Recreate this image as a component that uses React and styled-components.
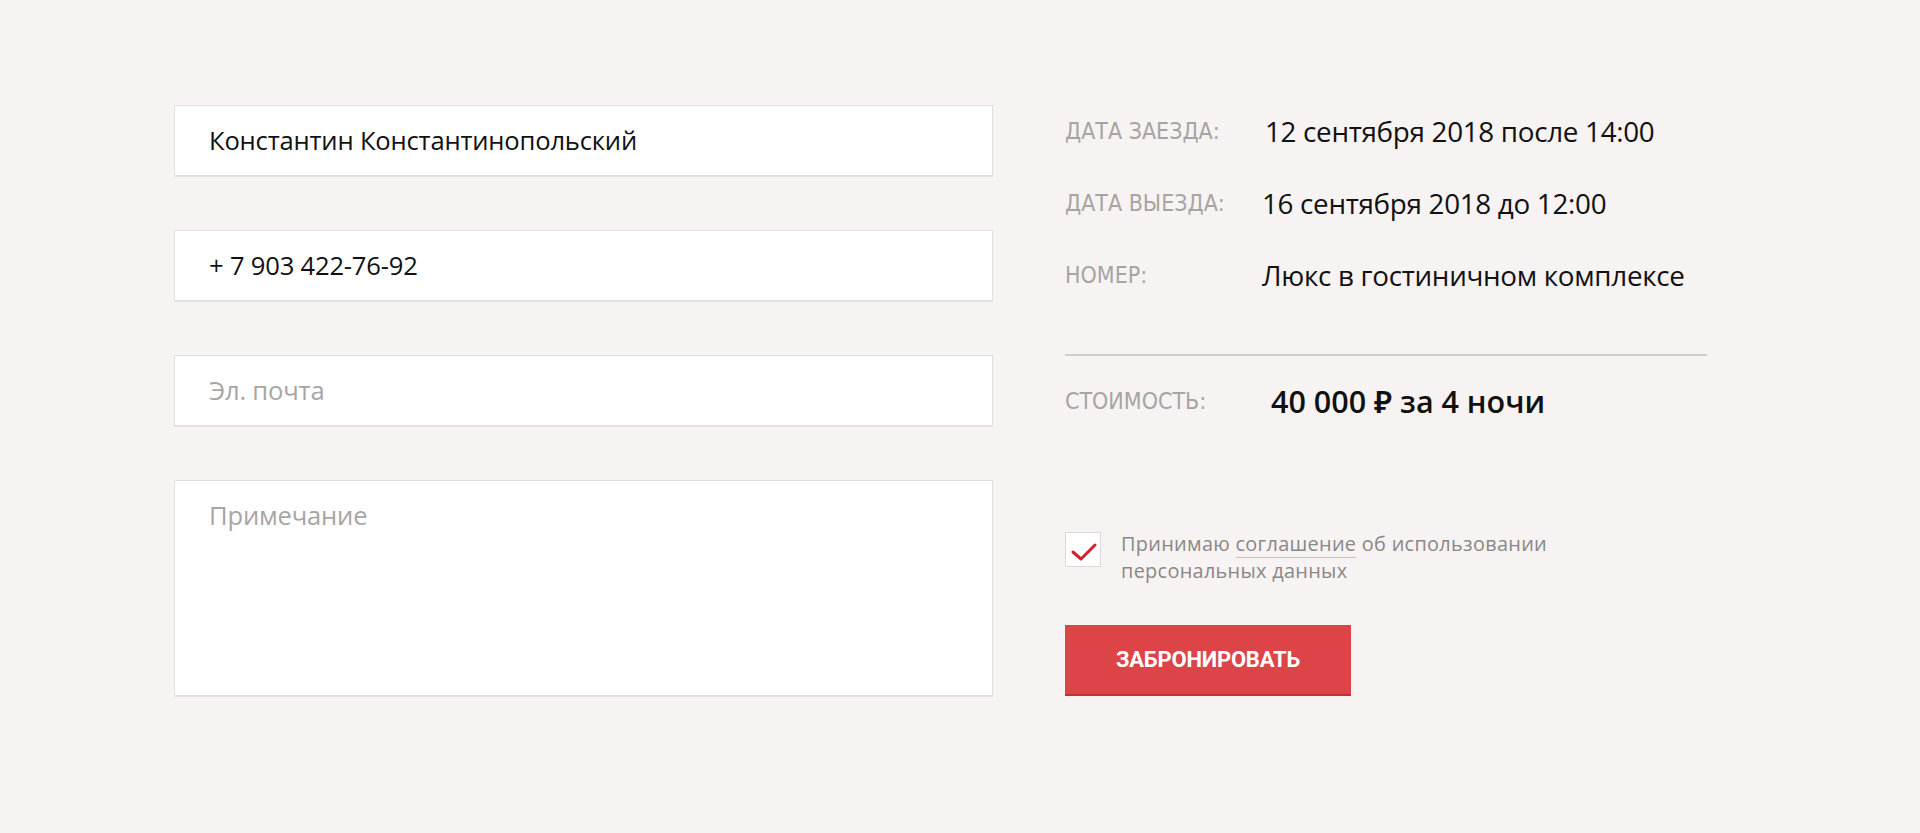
import React, { useState } from "react";
import styled, { createGlobalStyle } from "styled-components";

const GlobalStyle = createGlobalStyle`
    html, body {
        margin: 0;
        padding: 0;
        background: #f6f3f2;
    }
    body {
        font-family: "Open Sans", "Noto Sans", sans-serif;
        color: #111;
    }
`;

const Page = styled.main`
    min-height: 833px;
    box-sizing: border-box;
    padding-top: 105px;
`;

const Container = styled.div`
    width: 1572px;
    margin: 0 auto;
    display: grid;
    grid-template-columns: 819px 642px;
    column-gap: 72px;
    align-items: start;
`;

const Fields = styled.div`
    display: flex;
    flex-direction: column;
    gap: 54px;
`;

const Input = styled.input`
    box-sizing: border-box;
    width: 100%;
    height: 71px;
    padding: 0 34px;
    border: 1px solid #e2dedd;
    box-shadow: 0 1px 0 #e6e2e1;
    background: #fff;
    font-family: "Open Sans", "Noto Sans", sans-serif;
    font-size: 25.6px;
    letter-spacing: -0.2px;
    color: #111;
    outline: none;

    &::placeholder {
        color: #a9a5a5;
    }
`;

const Note = styled.textarea`
    box-sizing: border-box;
    width: 100%;
    height: 216px;
    padding: 18px 34px;
    border: 1px solid #e2dedd;
    box-shadow: 0 1px 0 #e6e2e1;
    background: #fff;
    font-family: "Open Sans", "Noto Sans", sans-serif;
    font-size: 25.6px;
    letter-spacing: -0.2px;
    line-height: 34px;
    color: #111;
    resize: none;
    outline: none;

    &::placeholder {
        color: #a9a5a5;
    }
`;

const Summary = styled.div`
    display: flex;
    flex-direction: column;
`;

const Row = styled.div`
    display: flex;
    align-items: center;
    height: 52px;
    margin-bottom: 20px;
`;

const Label = styled.span`
    flex: none;
    width: ${(p) => p.$width || 197}px;
    font-family: "Liberation Sans Narrow", "DejaVu Sans Condensed", sans-serif;
    font-stretch: condensed;
    font-size: 23px;
    color: #a8a4a4;
    text-transform: uppercase;
`;

const Value = styled.span`
    font-size: 27.8px;
    letter-spacing: -0.3px;
    color: #111;
`;

const Price = styled(Value)`
    font-size: 30.5px;
    font-weight: 600;
    letter-spacing: 0;
`;

const Divider = styled.hr`
    margin: 33px 0 19px;
    border: 0;
    border-top: 2px solid #d2cece;
`;

const Agreement = styled.label`
    display: flex;
    align-items: flex-start;
    gap: 20px;
    margin-top: 83px;
    cursor: pointer;
`;

const Box = styled.span`
    flex: none;
    box-sizing: border-box;
    width: 36px;
    height: 35px;
    margin-top: 2px;
    border: 1px solid #dcd8d7;
    background: #fff;
    display: flex;
    align-items: center;
    justify-content: center;
`;

const AgreementText = styled.span`
    font-size: 19.9px;
    line-height: 27px;
    letter-spacing: 0.3px;
    color: #8c8787;
`;

const Link = styled.a`
    color: inherit;
    text-decoration: none;
    border-bottom: 1px solid #c9c5c4;
`;

const Button = styled.button`
    margin-top: 41px;
    width: 286px;
    height: 71px;
    border: 0;
    border-bottom: 2px solid #c63035;
    background: #dc4447;
    color: #fff;
    font-family: "Roboto", "Open Sans", sans-serif;
    font-weight: 700;
    font-size: 22px;
    letter-spacing: -0.2px;
    text-transform: uppercase;
    cursor: pointer;
`;

function Check() {
    return (
        <svg width="30" height="30" viewBox="0 0 30 30">
            <polyline
                points="5,17 13,24 27,10"
                fill="none"
                stroke="#d3202c"
                strokeWidth="3"
                strokeLinecap="round"
                strokeLinejoin="round"
            />
        </svg>
    );
}

export default function App() {
    const [agreed, setAgreed] = useState(true);

    return (
        <Page>
            <GlobalStyle />
            <Container>
                <Fields>
                    <Input defaultValue="Константин Константинопольский" />
                    <Input defaultValue="+ 7 903 422-76-92" />
                    <Input placeholder="Эл. почта" />
                    <Note placeholder="Примечание" />
                </Fields>

                <Summary>
                    <Row>
                        <Label $width={200}>Дата заезда:</Label>
                        <Value>12 сентября 2018 после 14:00</Value>
                    </Row>
                    <Row>
                        <Label>Дата выезда:</Label>
                        <Value>16 сентября 2018 до 12:00</Value>
                    </Row>
                    <Row>
                        <Label>Номер:</Label>
                        <Value>Люкс в гостиничном комплексе</Value>
                    </Row>

                    <Divider />

                    <Row>
                        <Label $width={206}>Стоимость:</Label>
                        <Price>40 000 ₽ за 4 ночи</Price>
                    </Row>

                    <Agreement onClick={() => setAgreed(!agreed)}>
                        <Box>{agreed && <Check />}</Box>
                        <AgreementText>
                            Принимаю <Link href="#">соглашение</Link> об использовании
                            <br />
                            персональных данных
                        </AgreementText>
                    </Agreement>

                    <Button>Забронировать</Button>
                </Summary>
            </Container>
        </Page>
    );
}
